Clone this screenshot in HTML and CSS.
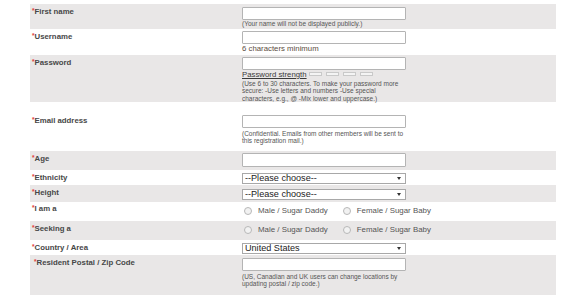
FILE: index.html
```html
<!DOCTYPE html>
<html>
<head>
<meta charset="utf-8">
<link rel="stylesheet" href="styles.css">
</head>
<body>
<div class="form">
  <div class="row gray r1">
    <div class="label"><span class="req">*</span>First name</div>
    <div class="field">
      <input class="txt" type="text">
      <div class="hint">(Your name will not be displayed publicly.)</div>
    </div>
  </div>
  <div class="row r2">
    <div class="label"><span class="req">*</span>Username</div>
    <div class="field">
      <input class="txt" type="text">
      <div class="note">6 characters minimum</div>
    </div>
  </div>
  <div class="row gray r3">
    <div class="label"><span class="req">*</span>Password</div>
    <div class="field">
      <input class="txt" type="password">
      <div class="strength"><a class="slink">Password strength</a><span class="bar"></span><span class="bar"></span><span class="bar"></span><span class="bar"></span></div>
      <div class="hint">(Use 6 to 30 characters. To make your password more<br>secure: -Use letters and numbers -Use special<br>characters, e.g., @ -Mix lower and uppercase.)</div>
    </div>
  </div>
  <div class="row r4">
    <div class="label"><span class="req">*</span>Email address</div>
    <div class="field">
      <input class="txt" type="text">
      <div class="hint gap">(Confidential. Emails from other members will be sent to<br>this registration mail.)</div>
    </div>
  </div>
  <div class="row gray r5">
    <div class="label"><span class="req">*</span>Age</div>
    <div class="field"><input class="txt tall" type="text"></div>
  </div>
  <div class="row r6">
    <div class="label"><span class="req">*</span>Ethnicity</div>
    <div class="field"><span class="sel"><select><option>--Please choose--</option></select></span></div>
  </div>
  <div class="row gray r7">
    <div class="label"><span class="req">*</span>Height</div>
    <div class="field"><span class="sel"><select><option>--Please choose--</option></select></span></div>
  </div>
  <div class="row r8">
    <div class="label"><span class="req">*</span>I am a</div>
    <div class="field radios">
      <label class="opt"><input type="radio" name="g1"><span>Male / Sugar Daddy</span></label>
      <label class="opt"><input type="radio" name="g1"><span>Female / Sugar Baby</span></label>
    </div>
  </div>
  <div class="row gray r9">
    <div class="label"><span class="req">*</span>Seeking a</div>
    <div class="field radios">
      <label class="opt"><input type="radio" name="g2"><span>Male / Sugar Daddy</span></label>
      <label class="opt"><input type="radio" name="g2"><span>Female / Sugar Baby</span></label>
    </div>
  </div>
  <div class="row r10">
    <div class="label"><span class="req">*</span>Country / Area</div>
    <div class="field"><span class="sel"><select class="country"><option>United States</option></select></span></div>
  </div>
  <div class="row gray r11">
    <div class="label indent"><span class="req">*</span>Resident Postal / Zip Code</div>
    <div class="field">
      <input class="txt" type="text">
      <div class="hint gap">(US, Canadian and UK users can change locations by<br>updating postal / zip code.)</div>
    </div>
  </div>
</div>
</body>
</html>
```

FILE: styles.css
```css
html, body {
  margin: 0;
  padding: 0;
  background: #ffffff;
}

body {
  font-family: "Liberation Sans", Arial, sans-serif;
  color: #444;
}

.form {
  margin: 4px 0 0 30px;
  width: 526px;
}

.row {
  display: flex;
  align-items: flex-start;
}

.row.gray {
  background: #e9e7e7;
}

.label {
  width: 210px;
  padding: 2px 0 0 2px;
  font-size: 7.8px;
  line-height: 10px;
  font-weight: bold;
  color: #474747;
  flex: none;
}

.label.indent {
  padding-left: 4px;
  width: 208px;
}

.req {
  color: #e23b3b;
  font-size: 6.5px;
  vertical-align: 1px;
}

.field {
  flex: 1;
}

.txt {
  display: block;
  box-sizing: border-box;
  width: 164px;
  height: 13px;
  margin: 0;
  padding: 0 2px;
  border: 1px solid #b4b4b4;
  border-radius: 1px;
  background: #fff;
  font-size: 8px;
  outline: none;
}

.txt.tall {
  height: 14px;
}

.hint {
  width: 172px;
  font-size: 6.5px;
  line-height: 7.3px;
  color: #555;
  white-space: nowrap;
}

.hint.gap {
  margin-top: 2px;
}

.note {
  font-size: 7.8px;
  line-height: 10px;
  color: #5b4c40;
}

.strength {
  display: flex;
  align-items: flex-start;
  height: 10px;
}

.slink {
  font-size: 7.8px;
  line-height: 10px;
  color: #3a3a3a;
  text-decoration: underline;
  margin-right: 2px;
}

.bar {
  display: block;
  box-sizing: border-box;
  width: 13px;
  height: 4px;
  margin: 2px 4px 0 0;
  border: 1px solid #c9c9c9;
  background: #f4f4f4;
}

.sel {
  display: block;
  position: relative;
  width: 164px;
}

.sel select {
  display: block;
  box-sizing: border-box;
  width: 164px;
  height: 11px;
  margin: 0;
  padding: 0 0 0 2px;
  border: 1px solid #a8a8a8;
  border-radius: 0;
  background: #fff;
  font-family: "Liberation Sans", Arial, sans-serif;
  font-size: 9.1px;
  line-height: 9px;
  color: #222;
  -webkit-appearance: none;
  appearance: none;
  outline: none;
}

.sel::after {
  content: "";
  position: absolute;
  right: 5px;
  top: 4px;
  border-left: 2px solid transparent;
  border-right: 2px solid transparent;
  border-top: 3.5px solid #333;
}

.radios {
  display: flex;
  align-items: center;
  height: 10px;
  padding-left: 2px;
}

.opt {
  display: flex;
  align-items: center;
  font-size: 7.9px;
  line-height: 10px;
  color: #555;
}

.opt + .opt {
  margin-left: 13px;
}

.opt input {
  -webkit-appearance: none;
  appearance: none;
  box-sizing: border-box;
  width: 8px;
  height: 8px;
  margin: 0 6px 0 2px;
  border: 1px solid #b8b8b8;
  border-radius: 50%;
  background: #f2f2f2;
}

/* per-row vertical rhythm */
.r1 .field { padding: 3px 0 1.7px; }
.r2 .field { padding: 2px 0 1px; }
.r3 .field { padding: 2px 0 0; }
.r4 .label { padding-top: 13.5px; }
.r4 .field { padding: 13px 0 6.4px; }
.r5 .field { padding: 2px 0 3px; }
.r6 .field { padding: 3px 0 1px; }
.r7 .field { padding: 4px 0 2px; }
.r8 .field, .r9 .field { padding: 4px 0 5px; }
.r8 .label { padding-top: 1px; }
.r10 .field { padding: 3px 0 1px; }
.r11 .field { padding: 3px 0 14px; }
```
